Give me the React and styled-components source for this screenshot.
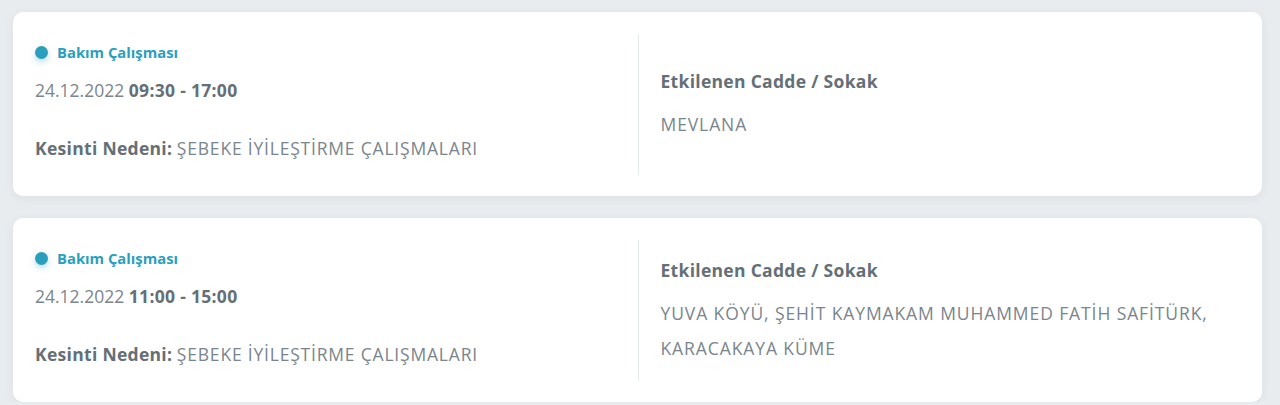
import styled, { createGlobalStyle } from 'styled-components';

const GlobalStyle = createGlobalStyle`
  body {
    margin: 0;
    background: #e9ecef;
    font-family: "Open Sans", "Noto Sans", sans-serif;
  }
`;

const List = styled.div`
  display: flex;
  flex-direction: column;
  gap: 22px;
  padding: 12px 18px 0 13px;
`;

const Card = styled.div`
  display: grid;
  grid-template-columns: 1fr 1fr;
  padding: 22px 0 21px;
  background: #fff;
  border-radius: 10px;
  box-shadow: 0 2px 10px rgba(60, 70, 80, 0.07);
`;

const Left = styled.div`
  display: flex;
  flex-direction: column;
  padding: 8px 0 13px 22px;
`;

const Status = styled.div`
  display: flex;
  align-items: center;
  gap: 9px;
  height: 20px;
  color: #2a9fbd;
  font-size: 14.8px;
  font-weight: 700;
`;

const Dot = styled.span`
  width: 13px;
  height: 13px;
  border-radius: 50%;
  background: #2a9fbd;
  box-shadow: 0 3px 6px rgba(42, 159, 189, 0.35);
`;

const Line = styled.div`
  margin-top: ${({ $gap }) => $gap}px;
  line-height: 28px;
  font-size: 17.5px;
  color: #7b858d;

  b {
    font-weight: 700;
    letter-spacing: 0.3px;
    color: #646f77;
  }
`;

const Caps = styled.span`
  letter-spacing: 0.8px;
`;

const Right = styled.div`
  display: flex;
  flex-direction: column;
  justify-content: center;
  border-left: 1px solid #e7eaec;
  padding: 0 40px 0 22px;
`;

const Heading = styled.div`
  font-size: 17.5px;
  font-weight: 700;
  line-height: 28px;
  letter-spacing: 0.3px;
  color: #646f77;
  margin-bottom: 12px;
`;

const Streets = styled.div`
  font-size: 17.5px;
  line-height: 35px;
  letter-spacing: 0.9px;
  color: #7b858d;
`;

const outages = [
  { date: '24.12.2022', time: '09:30 - 17:00', reason: 'ŞEBEKE İYİLEŞTİRME ÇALIŞMALARI', streets: 'MEVLANA' },
  {
    date: '24.12.2022',
    time: '11:00 - 15:00',
    reason: 'ŞEBEKE İYİLEŞTİRME ÇALIŞMALARI',
    streets: 'YUVA KÖYÜ, ŞEHİT KAYMAKAM MUHAMMED FATİH SAFİTÜRK, KARACAKAYA KÜME',
  },
];

export default function App() {
  return (
    <>
      <GlobalStyle />
      <List>
        {outages.map((o, i) => (
          <Card key={i}>
            <Left>
              <Status>
                <Dot />
                Bakım Çalışması
              </Status>
              <Line $gap={14}>
                {o.date} <b>{o.time}</b>
              </Line>
              <Line $gap={30}>
                <b>Kesinti Nedeni:</b> <Caps>{o.reason}</Caps>
              </Line>
            </Left>
            <Right>
              <Heading>Etkilenen Cadde / Sokak</Heading>
              <Streets>{o.streets}</Streets>
            </Right>
          </Card>
        ))}
      </List>
    </>
  );
}
